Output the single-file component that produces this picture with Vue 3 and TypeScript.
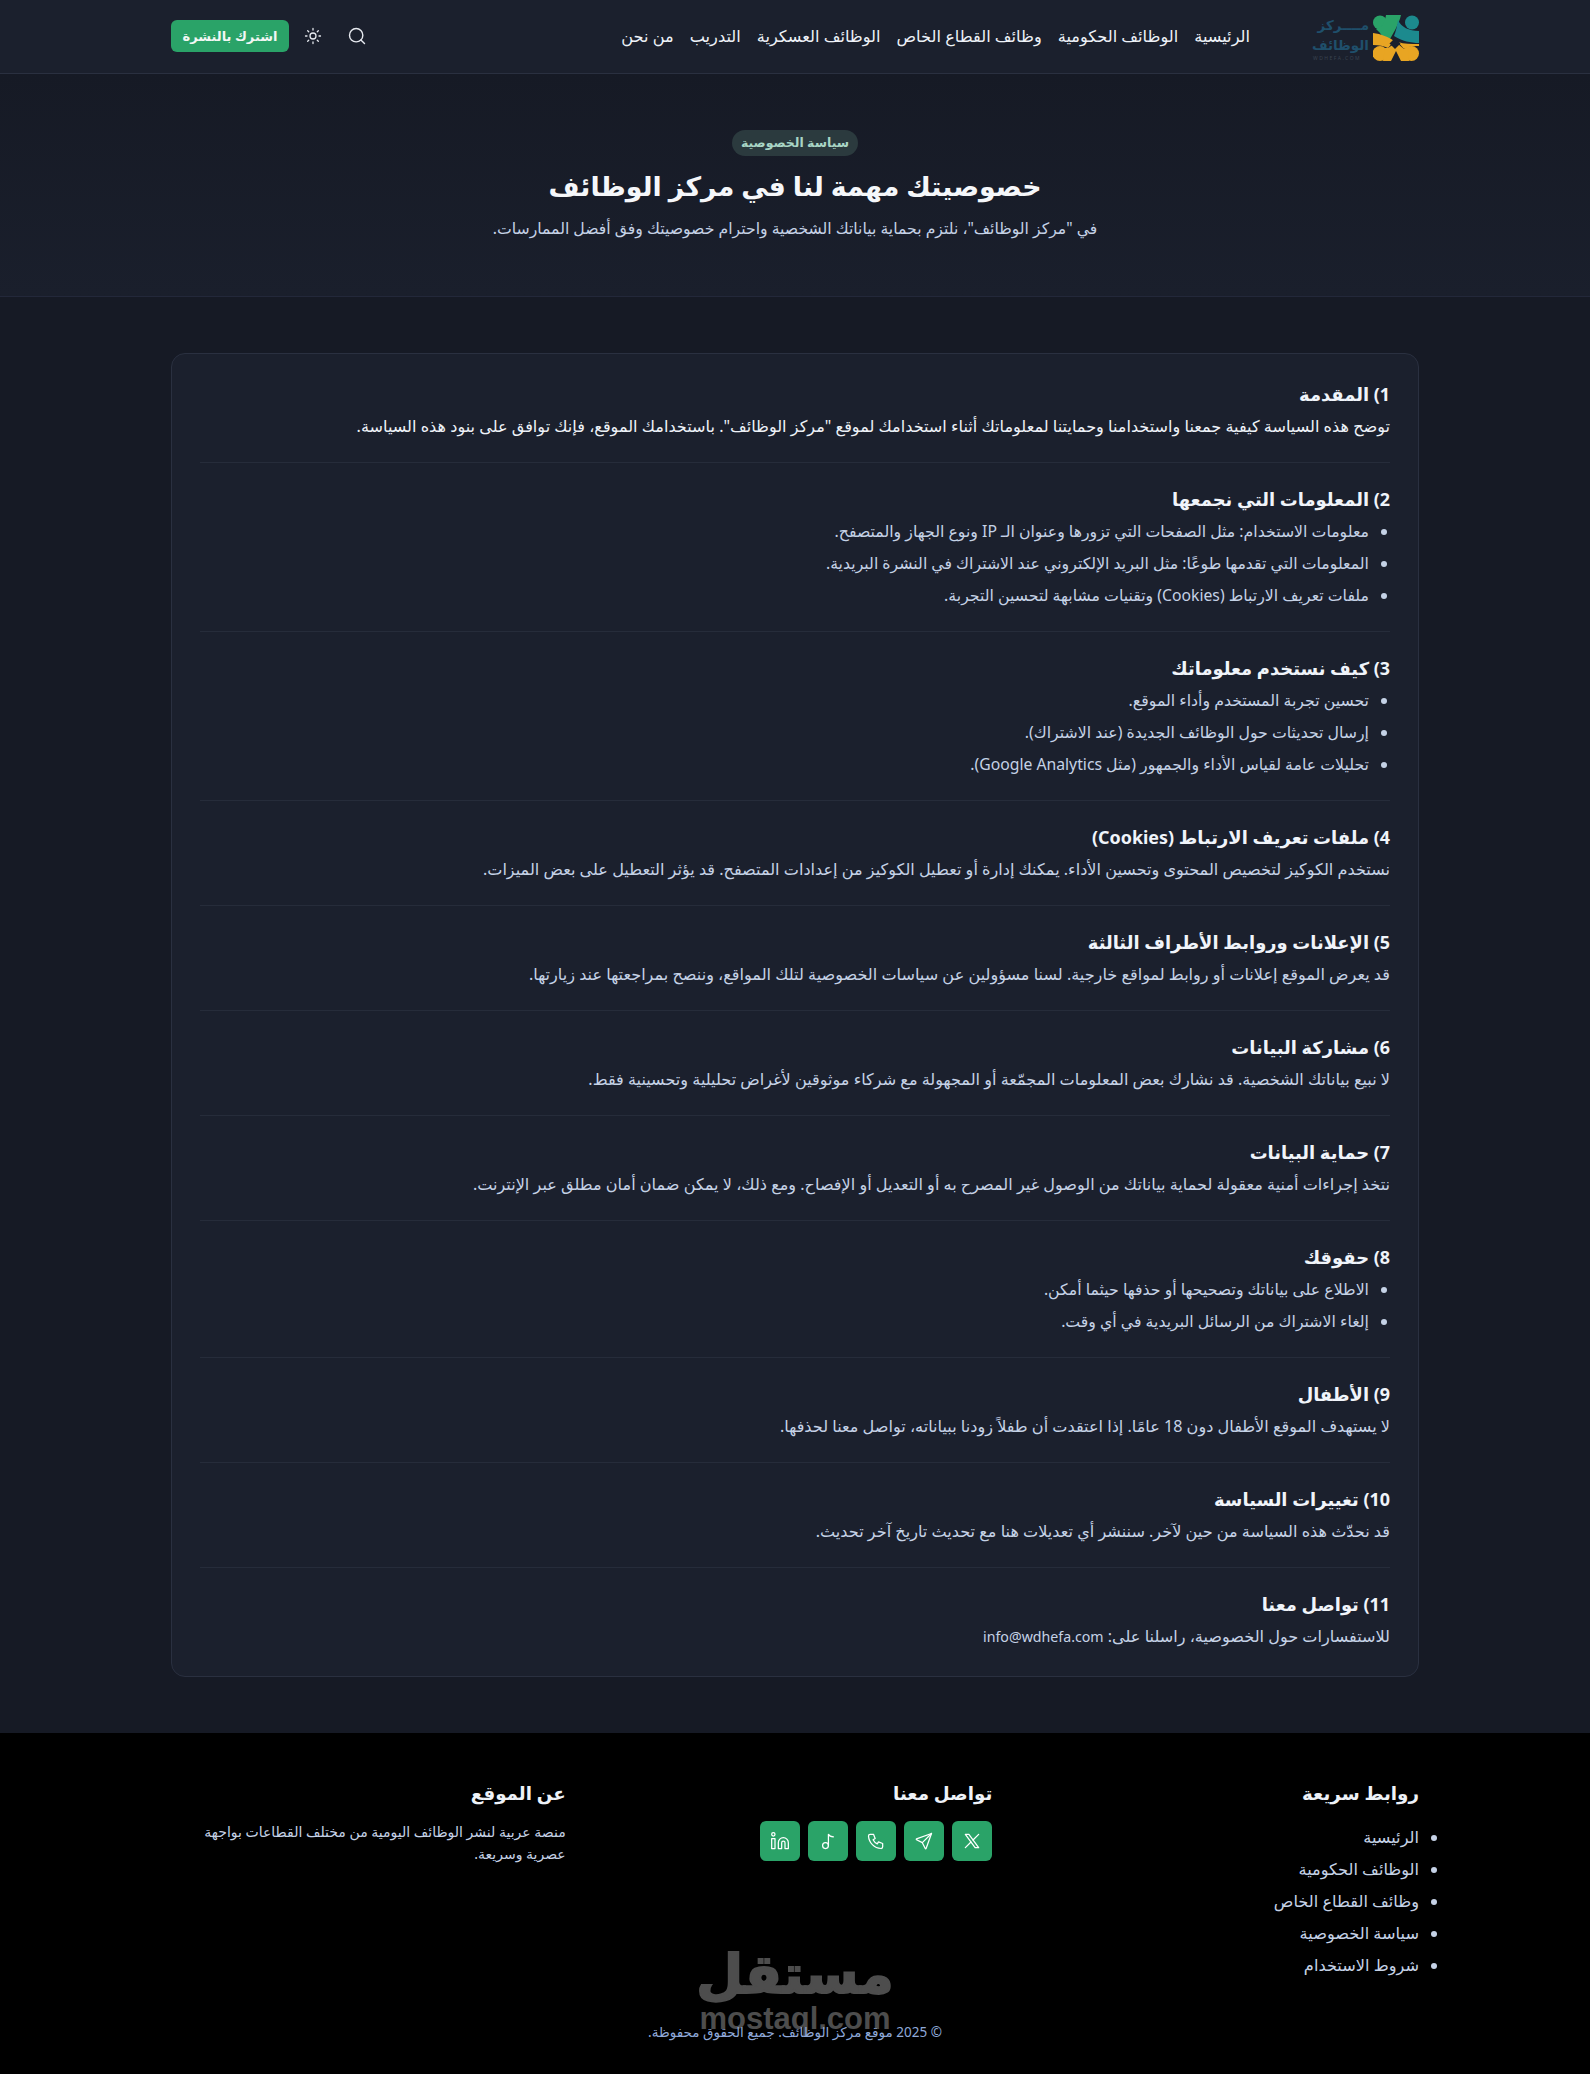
<script setup lang="ts">
interface Section { title: string; text?: string; items?: string[]; bright?: boolean; mail?: string }
const nav: string[] = ['الرئيسية', 'الوظائف الحكومية', 'وظائف القطاع الخاص', 'الوظائف العسكرية', 'التدريب', 'من نحن']
const sections: Section[] = [
  { title: '1) المقدمة', bright: true, text: 'توضح هذه السياسة كيفية جمعنا واستخدامنا وحمايتنا لمعلوماتك أثناء استخدامك لموقع "مركز الوظائف". باستخدامك الموقع، فإنك توافق على بنود هذه السياسة.' },
  { title: '2) المعلومات التي نجمعها', items: ['معلومات الاستخدام: مثل الصفحات التي تزورها وعنوان الـ IP ونوع الجهاز والمتصفح.', 'المعلومات التي تقدمها طوعًا: مثل البريد الإلكتروني عند الاشتراك في النشرة البريدية.', 'ملفات تعريف الارتباط (Cookies) وتقنيات مشابهة لتحسين التجربة.'] },
  { title: '3) كيف نستخدم معلوماتك', items: ['تحسين تجربة المستخدم وأداء الموقع.', 'إرسال تحديثات حول الوظائف الجديدة (عند الاشتراك).', 'تحليلات عامة لقياس الأداء والجمهور (مثل Google Analytics).'] },
  { title: '4) ملفات تعريف الارتباط (Cookies)', text: 'نستخدم الكوكيز لتخصيص المحتوى وتحسين الأداء. يمكنك إدارة أو تعطيل الكوكيز من إعدادات المتصفح. قد يؤثر التعطيل على بعض الميزات.' },
  { title: '5) الإعلانات وروابط الأطراف الثالثة', text: 'قد يعرض الموقع إعلانات أو روابط لمواقع خارجية. لسنا مسؤولين عن سياسات الخصوصية لتلك المواقع، وننصح بمراجعتها عند زيارتها.' },
  { title: '6) مشاركة البيانات', text: 'لا نبيع بياناتك الشخصية. قد نشارك بعض المعلومات المجمّعة أو المجهولة مع شركاء موثوقين لأغراض تحليلية وتحسينية فقط.' },
  { title: '7) حماية البيانات', text: 'نتخذ إجراءات أمنية معقولة لحماية بياناتك من الوصول غير المصرح به أو التعديل أو الإفصاح. ومع ذلك، لا يمكن ضمان أمان مطلق عبر الإنترنت.' },
  { title: '8) حقوقك', items: ['الاطلاع على بياناتك وتصحيحها أو حذفها حيثما أمكن.', 'إلغاء الاشتراك من الرسائل البريدية في أي وقت.'] },
  { title: '9) الأطفال', text: 'لا يستهدف الموقع الأطفال دون 18 عامًا. إذا اعتقدت أن طفلاً زودنا ببياناته، تواصل معنا لحذفها.' },
  { title: '10) تغييرات السياسة', text: 'قد نحدّث هذه السياسة من حين لآخر. سننشر أي تعديلات هنا مع تحديث تاريخ آخر تحديث.' },
  { title: '11) تواصل معنا', text: 'للاستفسارات حول الخصوصية، راسلنا على: ', mail: 'info@wdhefa.com' },
]
const links: string[] = ['الرئيسية', 'الوظائف الحكومية', 'وظائف القطاع الخاص', 'سياسة الخصوصية', 'شروط الاستخدام']
</script>

<template>
  <div class="page" dir="rtl">
    <header class="header">
      <div class="wrap header-row">
        <div class="brand">
          <svg class="mark" viewBox="0 0 46 46" width="46" height="46" aria-hidden="true">
            <circle cx="7" cy="7.500" r="7" fill="#2aa368" />
            <path d="M13 0H28C26 9 20 19 13 31C11 24 9 19 3 14C8 13 12 8 13 0z" fill="#2aa368" />
            <circle cx="39" cy="7.500" r="7" fill="#1c8a8e" />
            <path d="M25 5C28 12 36 16 46 16V28C38 28 29 26 21 21C23 16 24 11 25 5z" fill="#1c8a8e" />
            <path d="M0 18C8 19 16 22 21 26L15 33C11 31 6 30 0 30z" fill="#e8a523" />
            <path d="M46 29V31C38 31 35 32 31 34L25 27C31 29 38 29 46 29z" fill="#e8a523" />
            <circle cx="7" cy="38.500" r="7.500" fill="#e8a523" />
            <circle cx="38.500" cy="38.500" r="7.500" fill="#e8a523" />
            <path d="M12 33L15 33L21 29L23 31L25 29L31 34L35 31L36 46H28L23 36L18 46H10z" fill="#e8a523" />
            <path d="M22 23L27.500 28.500L22 34L16.500 28.500z" fill="#1b202d" />
          </svg>
          <div class="logo-text"><span>مــــركز</span><span>الوظائف</span><small>WDHEFA.COM</small></div>
        </div>
        <nav class="nav"><a v-for="n in nav" :key="n">{{ n }}</a></nav>
        <div class="tools">
          <svg class="tool" viewBox="0 0 24 24" width="20" height="20"><circle cx="11" cy="11" r="8" /><path d="M21 21l-4.300-4.300" /></svg>
          <svg class="tool sun" viewBox="0 0 24 24" width="18" height="18"><circle cx="12" cy="12" r="4" /><path d="M12 2v2M12 20v2M4.900 4.900l1.400 1.400M17.700 17.700l1.400 1.400M2 12h2M20 12h2M4.900 19.100l1.400-1.400M17.700 6.300l1.400-1.400" /></svg>
          <button class="sub">اشترك بالنشرة</button>
        </div>
      </div>
    </header>

    <section class="hero">
      <span class="pill">سياسة الخصوصية</span>
      <h1>خصوصيتك مهمة لنا في مركز الوظائف</h1>
      <p>في "مركز الوظائف"، نلتزم بحماية بياناتك الشخصية واحترام خصوصيتك وفق أفضل الممارسات.</p>
    </section>

    <main class="wrap main">
      <article class="card">
        <section v-for="s in sections" :key="s.title" class="item">
          <h2>{{ s.title }}</h2>
          <p v-if="s.text" :class="{ bright: s.bright }">{{ s.text }}<a v-if="s.mail" class="mail">{{ s.mail }}</a></p>
          <ul v-if="s.items"><li v-for="i in s.items" :key="i">{{ i }}</li></ul>
        </section>
      </article>
    </main>

    <footer class="footer">
      <div class="wrap foot-grid">
        <div>
          <h3>روابط سريعة</h3>
          <ul class="foot-links"><li v-for="l in links" :key="l">{{ l }}</li></ul>
        </div>
        <div>
          <h3>تواصل معنا</h3>
          <div class="socials">
            <a><svg viewBox="0 0 24 24"><path d="M4 4l11.733 16h4.267l-11.733-16z" /><path d="M4 20l6.768-6.768M13.228 10.772l6.772-6.772" /></svg></a>
            <a><svg viewBox="0 0 24 24"><path d="M10 14l11-11" /><path d="M21 3l-6.500 18a.55.55 0 0 1-1 0l-3.500-7-7-3.500a.55.55 0 0 1 0-1l18-6.500" /></svg></a>
            <a><svg viewBox="0 0 24 24"><path d="M5 4h4l2 5-2.500 1.500a11 11 0 0 0 5 5l1.500-2.500 5 2v4a2 2 0 0 1-2 2 16 16 0 0 1-15-15 2 2 0 0 1 2-2" /></svg></a>
            <a><svg viewBox="0 0 24 24"><circle cx="9" cy="17.500" r="3.500" /><path d="M12.500 17.500V4c1 2 3.500 3 6 3" /></svg></a>
            <a><svg viewBox="0 0 24 24"><path d="M16 8a6 6 0 0 1 6 6v7h-4v-7a2 2 0 0 0-4 0v7h-4v-7a6 6 0 0 1 6-6z" /><rect x="2" y="9" width="4" height="12" /><circle cx="4" cy="4" r="2" /></svg></a>
          </div>
        </div>
        <div>
          <h3>عن الموقع</h3>
          <p class="about">منصة عربية لنشر الوظائف اليومية من مختلف القطاعات بواجهة عصرية وسريعة.</p>
        </div>
      </div>
      <div class="watermark"><b>مستقل</b><span>mostaql.com</span></div>
      <p class="copy">© 2025 موقع مركز الوظائف. جميع الحقوق محفوظة.</p>
    </footer>
  </div>
</template>

<style>
body { background: #161a25; }
</style>

<style scoped>
.page { font-family: "Noto Sans", "DejaVu Sans", sans-serif; color: #e8edf5; background: #161a25; }
.wrap { width: 1248px; margin: 0 auto; }
.header { height: 74px; box-sizing: border-box; background: #1b202d; border-bottom: 1px solid #2a3040; }
.header-row { height: 72px; display: flex; align-items: center; }
.brand { display: flex; align-items: center; gap: 4px; width: 106px; margin-top: 4px; }
.mark { flex: none; }
.logo-text { display: flex; flex-direction: column; color: #1f4f6b; font-weight: 700; font-size: 13.500px; line-height: 20px; width: 56px; white-space: nowrap; }
.logo-text small { font-size: 5px; line-height: 6px; letter-spacing: 1.500px; color: #3a4350; direction: ltr; font-weight: 400; }
.nav { display: flex; gap: 16px; margin-right: 63px; font-size: 16.200px; color: #eef2f8; }
.tools { margin-right: auto; display: flex; align-items: center; }
.tool { fill: none; stroke: #e6e9ef; stroke-width: 1.700; stroke-linecap: round; margin-left: 25px; }
.tool.sun { margin-left: 15px; }
.sub { border: 0; background: #2aa368; color: #f2f7f4; font: 700 13px "Noto Sans", "DejaVu Sans", sans-serif; height: 32px; width: 118px; border-radius: 6px; padding: 0; }
.hero { height: 223px; box-sizing: border-box; border-bottom: 1px solid #23283a; padding-top: 56px; display: flex; flex-direction: column; align-items: center; background: linear-gradient(#161a25, #1a1f2c); }
.pill { background: #2b3a3e; color: #a8d5c5; font-size: 12.500px; font-weight: 700; line-height: 26px; padding: 0 8.500px; border-radius: 13px; }
.hero h1 { margin: 9px 0 0; font-size: 26.800px; line-height: 42px; color: #f5f7fa; }
.hero p { margin: 10px 0 0; font-size: 15.700px; line-height: 22px; color: #c5d2e6; }
.main { padding: 56px 0; }
.card { background: #1b202d; border: 1px solid #2a3040; border-radius: 14px; padding: 4px 28px; }
.item { padding: 20px 0; border-bottom: 1px solid #262c3a; }
.item:last-child { border-bottom: 0; }
.item h2 { margin: 0; font-size: 17.900px; line-height: 32px; color: #f0f4fa; }
.item p { margin: 0; height: 32px; font-size: 16.100px; line-height: 32px; color: #c5d2e6; }
.item p.bright { color: #eef2f8; }
.mail { font-size: 14.200px; line-height: 1; }
.item ul { margin: 0; padding: 0 21px 0 0; font-size: 15.750px; line-height: 32px; color: #c5d2e6; }
.footer { position: relative; background: #000; height: 341px; padding-top: 46px; box-sizing: border-box; }
.foot-grid { display: grid; grid-template-columns: repeat(3, 1fr); gap: 32px; }
.footer h3 { margin: 0; font-size: 18.300px; line-height: 28px; color: #eef2f8; }
.foot-links { margin: 14px 0 0; padding: 0; font-size: 16.200px; line-height: 32px; color: #c5d2e6; }
.socials { display: flex; gap: 8px; margin-top: 14px; }
.socials a { width: 40px; height: 40px; border-radius: 6px; background: #2aa368; display: flex; align-items: center; justify-content: center; }
.socials svg { width: 20px; height: 20px; fill: none; stroke: #fff; stroke-width: 1.500; stroke-linecap: round; stroke-linejoin: round; }
.about { margin: 14px 0 0; font-size: 14px; line-height: 22px; color: #c5d2e6; }
.copy { margin: 0; position: absolute; left: 0; right: 0; bottom: 32px; text-align: center; font-size: 13.500px; line-height: 20px; color: #8fa9d9; }
.watermark { position: absolute; left: 0; right: 0; top: 207px; display: flex; flex-direction: column; align-items: center; color: #4d4d4d; }
.watermark b { font-size: 54px; line-height: 64px; -webkit-text-stroke: 2px #4d4d4d; }
.watermark span { font: 700 31px/30px "Liberation Sans", sans-serif; }
</style>
